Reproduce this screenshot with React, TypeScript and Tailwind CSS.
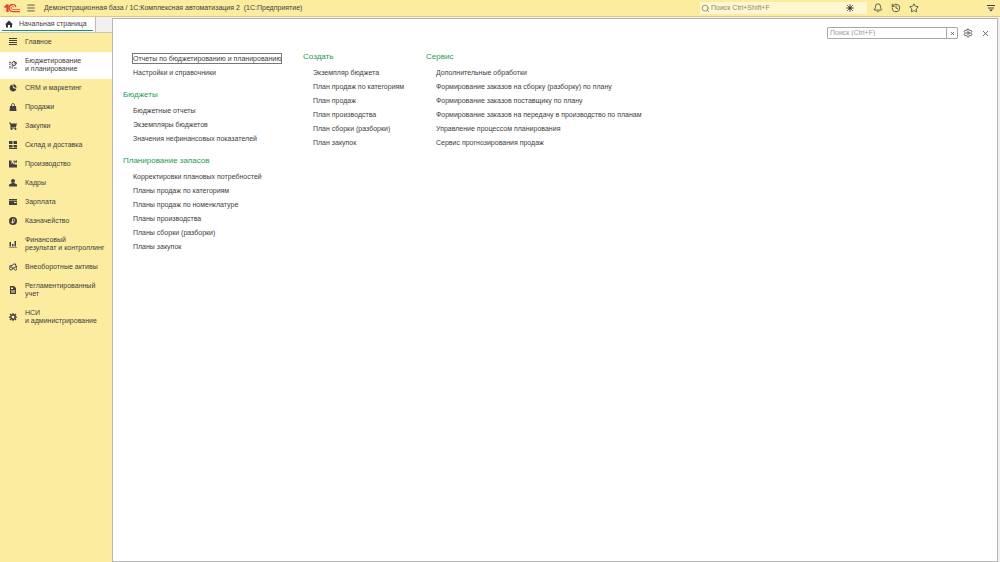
import { ReactNode } from 'react'
import { Bell, History, Menu, Search, Settings, Star, X } from 'lucide-react'

interface Section {
  label: string[]
  icon: ReactNode
  active?: boolean
}

interface Group {
  title?: string
  items: string[]
}

const sections: Section[] = [
  { label: ['Главное'], icon: <path d="M0 0h16v2H0zM0 4h16v2H0zM0 8h16v2H0zM0 12h16v2H0z" /> },
  {
    label: ['Бюджетирование', 'и планирование'],
    active: true,
    icon: (
      <>
        <path d="M0 4l2-4 2 4zM1 5h2v3H1zM1 10h2v5H1zM5 13h3v2H5zM10 13h2v2h-2zM13 12l3 2-3 2z" />
        <circle cx="10" cy="5" r="4" fill="none" stroke="currentColor" strokeWidth="2" />
        <path d="M10 3h6v2h-6zM5 9h4v2H5z" />
      </>
    ),
  },
  { label: ['CRM и маркетинг'], icon: <path d="M7 1a7 7 0 1 0 8 9L8 8zM9 0v6l6 2A8 8 0 0 0 9 0z" /> },
  {
    label: ['Продажи'],
    icon: (
      <>
        <path d="M2 6h12l1 10H1z" />
        <path d="M5 7V4a3 3 0 0 1 6 0v3" fill="none" stroke="currentColor" strokeWidth="1.5" />
      </>
    ),
  },
  {
    label: ['Закупки'],
    icon: (
      <>
        <path d="M0 1h3l1 2h12l-2 7H5v1h9v2H3V9L2 3H0z" />
        <circle cx="5" cy="14" r="2" />
        <circle cx="13" cy="14" r="2" />
      </>
    ),
  },
  { label: ['Склад и доставка'], icon: <path d="M0 0h7v6H0zM9 0h7v6H9zM0 8h7v5H0zM9 8h7v5H9zM0 14h16v2H0z" /> },
  { label: ['Производство'], icon: <path d="M0 15V1h5v7l3-3v4l3-3v3h5v6zM9 1h2v2h2V1h3v4H9z" /> },
  {
    label: ['Кадры'],
    icon: (
      <>
        <circle cx="8" cy="4" r="4" />
        <path d="M6 8h4l6 3v4H0v-4z" />
      </>
    ),
  },
  { label: ['Зарплата'], icon: <path d="M0 2h16v3H0zM0 6h16v8H0zM10 8v2h5V8z" fillRule="evenodd" /> },
  {
    label: ['Казначейство'],
    icon: (
      <>
        <circle cx="8" cy="8" r="8" />
        <path d="M7 13V4h2a2 2 0 0 1 0 5H5M5 11h5" fill="none" stroke="#fbec9f" strokeWidth="1.5" />
      </>
    ),
  },
  { label: ['Финансовый', 'результат и контроллинг'], icon: <path d="M1 4h3v9H1zM6 8h3v5H6zM11 2h3v11h-3zM0 14h16v1H0z" /> },
  {
    label: ['Внеоборотные активы'],
    icon: (
      <g fill="none" stroke="currentColor" strokeWidth="2">
        <circle cx="4" cy="11" r="3" />
        <circle cx="13" cy="11" r="3" />
        <path d="M0 7l4-2h3l2-3h4l1 5h2M7 10h3" />
      </g>
    ),
  },
  {
    label: ['Регламентированный', 'учет'],
    icon: <path d="M2 0h8l4 4v12H2zM4 3v3h4V3zM4 8v1h8V8zM4 10v1h8v-1zM4 12v1h8v-1z" fillRule="evenodd" />,
  },
  {
    label: ['НСИ', 'и администрирование'],
    icon: (
      <>
        <circle cx="8" cy="8" r="4.5" fill="none" stroke="currentColor" strokeWidth="3" />
        <path d="M8 0v3M8 13v3M0 8h3M13 8h3M2 2l2 2M12 12l2 2M14 2l-2 2M4 12l-2 2" stroke="currentColor" strokeWidth="2.5" />
      </>
    ),
  },
]

const leftGroups: Group[] = [
  { title: 'Бюджеты', items: ['Бюджетные отчеты', 'Экземпляры бюджетов', 'Значения нефинансовых показателей'] },
  {
    title: 'Планирование запасов',
    items: [
      'Корректировки плановых потребностей',
      'Планы продаж по категориям',
      'Планы продаж по номенклатуре',
      'Планы производства',
      'Планы сборки (разборки)',
      'Планы закупок',
    ],
  },
]

const createGroup: Group = {
  title: 'Создать',
  items: ['Экземпляр бюджета', 'План продаж по категориям', 'План продаж', 'План производства', 'План сборки (разборки)', 'План закупок'],
}

const serviceGroup: Group = {
  title: 'Сервис',
  items: [
    'Дополнительные обработки',
    'Формирование заказов на сборку (разборку) по плану',
    'Формирование заказов поставщику по плану',
    'Формирование заказов на передачу в производство по планам',
    'Управление процессом планирования',
    'Сервис прогнозирования продаж',
  ],
}

function Logo() {
  return (
    <svg viewBox="0 0 32 18" className="h-[9px] w-4" fill="none" stroke="#e0402f">
      <path d="M0 6l5-5h4v15H5V6L2 8z" fill="#e0402f" strokeWidth="0.5" />
      <path d="M24 6a7 7 0 1 0-7 9h15" strokeWidth="2.5" />
      <path d="M20 7a3 3 0 1 0-3 4h15" strokeWidth="1.5" />
    </svg>
  )
}

function MenuGroup({ title, items }: Group) {
  return (
    <section>
      <h2 className="text-[8px] leading-[12px] text-[#1a9c50]">{title}</h2>
      <ul className="mt-[3px] pl-[10px]">
        {items.map(item => (
          <li key={item} className="h-[14px] leading-[14px]">
            <a href="#" className="whitespace-nowrap hover:underline">{item}</a>
          </li>
        ))}
      </ul>
    </section>
  )
}

export default function App() {
  return (
    <div className="flex min-h-screen flex-col bg-[#f0f0f0] font-['Liberation_Sans',Arial,sans-serif] text-[7px] text-[#404040]">
      <header className="flex h-[17px] items-center border-b border-[#d8cb85] bg-[#fbec9f] pl-1 pr-[5px]">
        <Logo />
        <button aria-label="Меню" className="ml-[6px]">
          <Menu className="size-[10px]" strokeWidth={2} />
        </button>
        <h1 className="ml-2 whitespace-pre">Демонстрационная база / 1С:Комплексная автоматизация 2  (1С:Предприятие)</h1>
        <div className="ml-auto flex h-3 w-[167px] items-center bg-[#fef7cf] pl-px pr-[13px]">
          <Search className="size-[9px] text-[#777]" strokeWidth={2} />
          <input
            aria-label="Поиск"
            placeholder="Поиск Ctrl+Shift+F"
            className="min-w-0 flex-1 bg-transparent pl-px outline-none placeholder:text-[#8f8a70]"
          />
          <svg viewBox="0 0 16 16" className="size-2" stroke="#333" strokeWidth="1.5">
            <path d="M8 0v16M0 8h16M2 2l12 12M14 2L2 14" />
            <circle cx="8" cy="8" r="3" fill="#333" stroke="none" />
          </svg>
        </div>
        <div className="ml-[6px] flex gap-2">
          <button aria-label="Уведомления"><Bell className="size-[10px]" strokeWidth={2} /></button>
          <button aria-label="История"><History className="size-[10px]" strokeWidth={2} /></button>
          <button aria-label="Избранное"><Star className="size-[10px]" strokeWidth={2} /></button>
        </div>
        <button aria-label="Настройка панели" className="ml-[68px]">
          <svg viewBox="0 0 16 16" className="size-2" fill="currentColor">
            <path d="M0 2h16v2H0zM2 7h12v2H2zM4 11h8l-4 4z" />
          </svg>
        </button>
      </header>

      <div className="flex flex-1">
        <aside className="flex w-[112px] flex-col bg-[#fbec9f]">
          <div className="flex h-4 border-b border-[#c8c8b8] bg-[#f0f0f0]">
            <button className="flex w-24 items-center border-r border-[#bbb] bg-white px-[2px] pb-px">
              <span className="flex h-full w-full items-center gap-[6px] border-b border-[#0c9b50] pl-[3px] pt-px">
                <svg viewBox="0 0 16 16" className="size-2" fill="#333">
                  <path d="M8 1l8 8h-2v6h-4v-5H6v5H2V9H0z" />
                </svg>
                Начальная страница
              </span>
            </button>
          </div>
          <nav>
            {sections.map(({ label, icon, active }) => (
              <a
                key={label[0]}
                href="#"
                className={`flex items-center gap-2 pt-[5px] pb-[6px] pl-[9px] leading-[8px] ${active ? 'bg-white' : ''}`}
              >
                <svg viewBox="0 0 16 16" className="size-2 shrink-0" fill="currentColor">
                  {icon}
                </svg>
                <span className="whitespace-nowrap">
                  {label.map(line => (
                    <span key={line} className="block">{line}</span>
                  ))}
                </span>
              </a>
            ))}
          </nav>
        </aside>

        <main className="mr-[2px] mt-px flex-1 border border-[#b5b5b5] bg-white">
          <div className="flex h-7 items-center justify-end pr-[7px]">
            <div className="flex h-3 w-[131px] rounded-[1px] border border-[#a8a8a8]">
              <input
                aria-label="Поиск в меню"
                placeholder="Поиск (Ctrl+F)"
                className="min-w-0 flex-1 px-[2px] outline-none placeholder:text-[#9a9a9a]"
              />
              <button aria-label="Очистить" className="flex w-[11px] items-center justify-center border-l border-[#a8a8a8]">
                <X className="size-[5px]" strokeWidth={3} />
              </button>
            </div>
            <button aria-label="Настройки" className="ml-[5px]"><Settings className="size-[10px]" strokeWidth={2} /></button>
            <button aria-label="Закрыть" className="ml-2"><X className="size-[9px]" strokeWidth={2} /></button>
          </div>

          <div className="flex pl-[10px]">
            <div className="w-[180px]">
              <ul className="mt-[5px] pl-[10px]">
                <li className="h-[14px] leading-[14px]">
                  <a href="#" className="whitespace-nowrap py-px outline outline-[#777]">
                    Отчеты по бюджетированию и планированию
                  </a>
                </li>
                <li className="h-[14px] leading-[14px]"><a href="#">Настройки и справочники</a></li>
              </ul>
              <div className="mt-[9px] flex flex-col gap-[9px]">
                {leftGroups.map(group => (
                  <MenuGroup key={group.title} {...group} />
                ))}
              </div>
            </div>
            <div className="mt-1 w-[123px]"><MenuGroup {...createGroup} /></div>
            <div className="mt-1"><MenuGroup {...serviceGroup} /></div>
          </div>
        </main>
      </div>
    </div>
  )
}
